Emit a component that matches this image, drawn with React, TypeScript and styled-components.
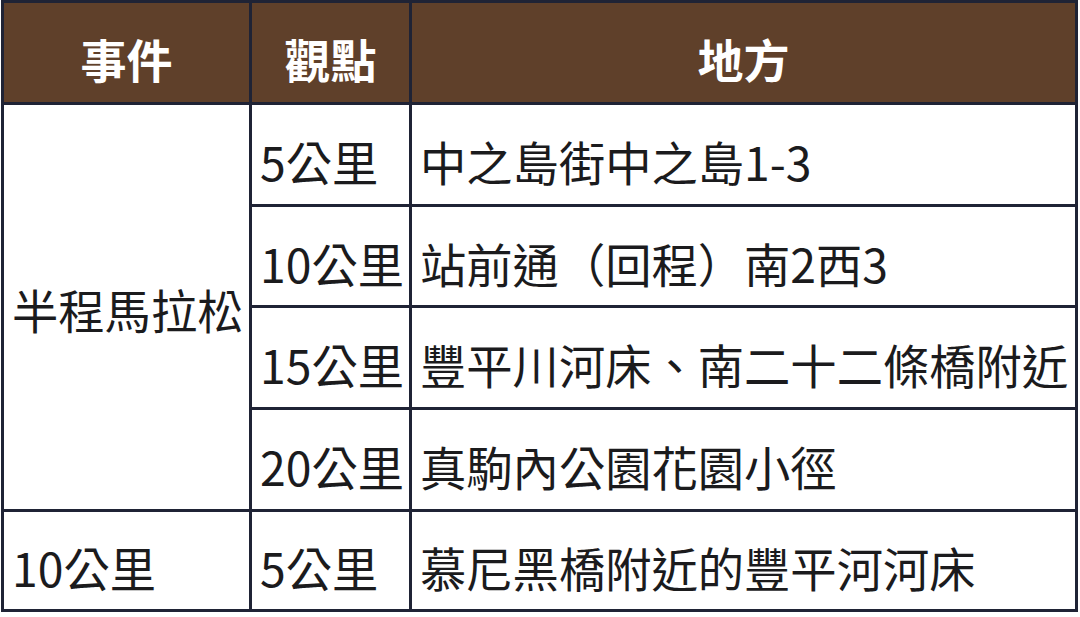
import React from 'react';
import styled, { createGlobalStyle } from 'styled-components';

const GlobalStyle = createGlobalStyle`
  html, body {
    margin: 0;
    padding: 0;
    background: #ffffff;
  }
  body {
    font-family: 'Noto Sans CJK TC', 'Noto Sans', sans-serif;
  }
`;

const Page = styled.div`
  padding: 0 0 0 1px;
`;

// grid with a dark background: the gaps become the table lines
const Table = styled.div`
  display: grid;
  grid-template-columns: 245px 157px 663px;
  grid-template-rows: 99px 99px 98px 99px 99px 97px;
  gap: 3px;
  padding: 3px;
  width: 1077px;
  box-sizing: border-box;
  background: #1f2335;
`;

const HeadCell = styled.div`
  display: flex;
  align-items: center;
  justify-content: center;
  padding-top: 13px;
  box-sizing: border-box;
  background: #5f402a;
  color: #ffffff;
  font-size: 46px;
  font-weight: 700;
  line-height: 1.2;
`;

const Cell = styled.div<{ $span?: number; $lift?: boolean }>`
  display: flex;
  align-items: center;
  padding: ${(p) => (p.$lift ? '4px 8px 0' : '13px 8px 0')};
  box-sizing: border-box;
  background: #ffffff;
  color: #1b1b1d;
  font-size: 46.3px;
  line-height: 1.2;
  white-space: nowrap;
  grid-row: ${(p) => (p.$span ? `span ${p.$span}` : 'auto')};
`;

const halfRows = [
  { point: '5公里', place: '中之島街中之島1-3' },
  { point: '10公里', place: '站前通（回程）南2西3' },
  { point: '15公里', place: '豐平川河床、南二十二條橋附近' },
  { point: '20公里', place: '真駒內公園花園小徑' },
];

const App: React.FC = () => {
  return (
    <Page>
      <GlobalStyle />
      <Table>
        <HeadCell>事件</HeadCell>
        <HeadCell>觀點</HeadCell>
        <HeadCell>地方</HeadCell>

        {/* 半程馬拉松 spans the four checkpoint rows */}
        <Cell $span={4} $lift>
          半程馬拉松
        </Cell>
        {halfRows.map((row) => (
          <React.Fragment key={row.point}>
            <Cell>{row.point}</Cell>
            <Cell>{row.place}</Cell>
          </React.Fragment>
        ))}

        <Cell>10公里</Cell>
        <Cell>5公里</Cell>
        <Cell>慕尼黑橋附近的豐平河河床</Cell>
      </Table>
    </Page>
  );
};

export default App;
